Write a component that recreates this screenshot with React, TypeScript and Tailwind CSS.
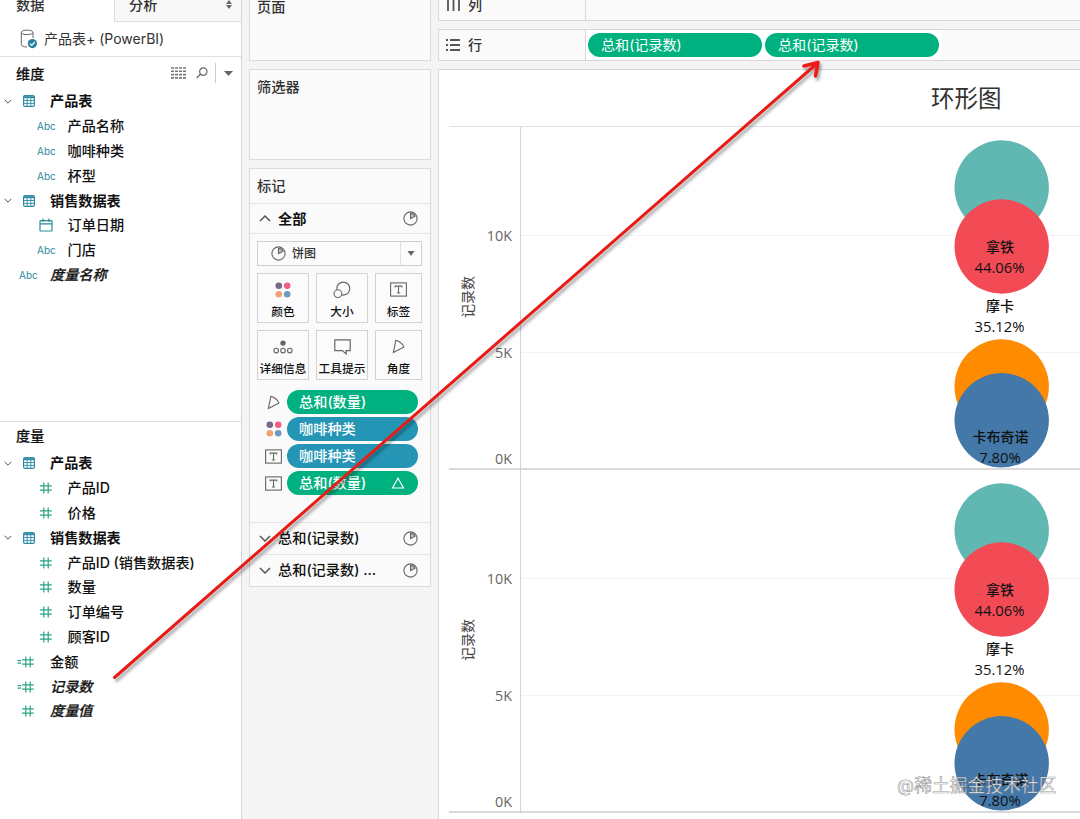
import type { ReactNode } from "react";

const FONT = "font-['Open_Sans','Noto_Sans_CJK_SC',sans-serif]";

function Chevron({ up = false, size = 8 }: { up?: boolean; size?: number }) {
  return (
    <svg width={size} height={size / 2 + 1} viewBox="0 0 12 7" fill="none" stroke="#555" strokeWidth="1.5" className="shrink-0">
      <path d={up ? "M1 6L6 1L11 6" : "M1 1L6 6L11 1"} />
    </svg>
  );
}

function TableIcon() {
  return (
    <svg width="12" height="12" viewBox="0 0 12 12" fill="none" stroke="#2d8ba3" className="shrink-0">
      <rect x="0.6" y="0.6" width="10.8" height="10.8" rx="1.4" strokeWidth="1.2" />
      <path d="M1 2.2H11" strokeWidth="2" />
      <path d="M1 5.5H11M1 8.4H11M4.2 3V11M7.8 3V11" strokeWidth="0.9" />
    </svg>
  );
}

function CalendarIcon() {
  return (
    <svg width="14" height="14" viewBox="0 0 14 14" fill="none" stroke="#2d8a9a" strokeWidth="1.2">
      <rect x="1" y="2.6" width="12" height="10.4" rx="0.8" />
      <path d="M1 5.9H13M4 0.6V4M10 0.6V4" />
    </svg>
  );
}

function HashIcon({ calc = false }: { calc?: boolean }) {
  return (
    <svg width="17" height="12" viewBox="0 0 17 12" fill="none" stroke="#2ca587" strokeWidth="1.2" className="shrink-0">
      <path d="M5 3.9H16.8M5 8.1H16.8M8.8 0.5V11.5M13.2 0.5V11.5" />
      {calc && <path d="M0.5 4.6H4M0.5 7.2H4" />}
    </svg>
  );
}

function Abc() {
  return <span className="font-['Inter',sans-serif] text-[10px] text-[#2d8a9a]">Abc</span>;
}

function PieIcon({ size = 15 }: { size?: number }) {
  return (
    <svg width={size} height={size} viewBox="0 0 15 15" fill="none" stroke="#666" strokeWidth="1.1" className="shrink-0">
      <circle cx="7.5" cy="7.5" r="6.6" />
      <path d="M7.5 7.5V2.4C9.6 2.4 11.2 3.4 12 5.2Z" fill="#c4c4c4" />
    </svg>
  );
}

function ColorDots() {
  return (
    <svg width="16" height="16" viewBox="0 0 16 16" className="shrink-0">
      <circle cx="3.8" cy="3.8" r="3.3" fill="#7b6888" />
      <circle cx="12.2" cy="3.8" r="3.3" fill="#f05f86" />
      <circle cx="3.8" cy="12.2" r="3.3" fill="#f3a274" />
      <circle cx="12.2" cy="12.2" r="3.3" fill="#7399c2" />
    </svg>
  );
}

function SizeIcon() {
  return (
    <svg width="18" height="18" viewBox="0 0 18 18" fill="none" stroke="#666" strokeWidth="1.1">
      <circle cx="10.3" cy="7.6" r="6.5" />
      <circle cx="4.9" cy="12.6" r="3.9" fill="#fbfbfb" />
    </svg>
  );
}

function LabelIcon() {
  return (
    <svg width="17" height="15" viewBox="0 0 17 15" fill="none" stroke="#666" strokeWidth="1.1" className="shrink-0">
      <rect x="0.6" y="0.9" width="15.8" height="13.2" />
      <path d="M5.2 5.6V4.1H11.8V5.6M8.5 4.1V11M6.9 11H10.1" />
    </svg>
  );
}

function DetailIcon() {
  return (
    <svg width="20" height="14" viewBox="0 0 20 14" fill="none" stroke="#666" strokeWidth="1.1">
      <circle cx="10" cy="3.1" r="2.7" fill="#666" stroke="none" />
      <circle cx="3.2" cy="10.6" r="2.3" />
      <circle cx="10" cy="10.6" r="2.3" />
      <circle cx="16.8" cy="10.6" r="2.3" />
    </svg>
  );
}

function TooltipIcon() {
  return (
    <svg width="17" height="16" viewBox="0 0 17 16" fill="none" stroke="#666" strokeWidth="1.2">
      <path d="M0.8 0.9H16.2V11.6H12.2V15L8.4 11.6H0.8Z" />
    </svg>
  );
}

function AngleIcon() {
  return (
    <svg width="13" height="15" viewBox="0 0 13 15" fill="none" stroke="#666" strokeWidth="1.1" className="shrink-0">
      <path d="M3.8 1.4C7 2.1 10.4 4.5 12 8.1L1.4 13.6Z" />
    </svg>
  );
}

type Field = { kind: "table" | "abc" | "date" | "num"; text: string; root?: boolean; italic?: boolean; calc?: boolean };

const dimensions: Field[] = [
  { kind: "table", text: "产品表" },
  { kind: "abc", text: "产品名称" },
  { kind: "abc", text: "咖啡种类" },
  { kind: "abc", text: "杯型" },
  { kind: "table", text: "销售数据表" },
  { kind: "date", text: "订单日期" },
  { kind: "abc", text: "门店" },
  { kind: "abc", text: "度量名称", root: true, italic: true },
];

const measures: Field[] = [
  { kind: "table", text: "产品表" },
  { kind: "num", text: "产品ID" },
  { kind: "num", text: "价格" },
  { kind: "table", text: "销售数据表" },
  { kind: "num", text: "产品ID (销售数据表)" },
  { kind: "num", text: "数量" },
  { kind: "num", text: "订单编号" },
  { kind: "num", text: "顾客ID" },
  { kind: "num", text: "金额", root: true, calc: true },
  { kind: "num", text: "记录数", root: true, italic: true, calc: true },
  { kind: "num", text: "度量值", root: true, italic: true },
];

function FieldRow({ field }: { field: Field }) {
  if (field.kind === "table") {
    return (
      <div className="flex h-[24.8px] items-center pl-1">
        <Chevron />
        <span className="ml-[11px] flex w-[27px]"><TableIcon /></span>
        <span className="font-bold">{field.text}</span>
      </div>
    );
  }
  return (
    <div className={field.root ? "flex h-[24.8px] items-center pl-[17px]" : "flex h-[24.8px] items-center pl-[35px]"}>
      <span className={field.root ? "flex w-[33px]" : "flex w-[32.5px]"}>
        {field.kind === "abc" && <span className="ml-0.5 flex"><Abc /></span>}
        {field.kind === "date" && <span className="ml-1 flex"><CalendarIcon /></span>}
        {field.kind === "num" && <HashIcon calc={field.calc} />}
      </span>
      <span className={field.italic ? "italic font-medium [-webkit-text-stroke:0.25px_#222]" : "font-medium"}>{field.text}</span>
    </div>
  );
}

function Sidebar() {
  return (
    <aside className="flex w-[242px] shrink-0 flex-col border-r border-[#d5d5d5] bg-white font-['Inter','Noto_Sans_CJK_SC',sans-serif] text-[14.15px] leading-5 text-[#111]">
      <div className="flex h-[22px] overflow-hidden text-[#333] font-medium">
        <div className="-mt-[5px] w-[114px] pl-4">数据</div>
        <div className="flex flex-1 items-start justify-between border-b border-l border-[#dedede] bg-[#f8f8f8] pl-3.5 pr-2">
          <span className="-mt-[5px]">分析</span>
          <svg width="8" height="10" viewBox="0 0 8 10" fill="#666"><path d="M4 0L7 4H1ZM4 9L7 5H1Z" /></svg>
        </div>
      </div>
      <div className="flex h-[35px] items-center border-b border-[#dedede] pl-5 text-[#333]">
        <svg width="18" height="20" viewBox="0 0 18 20" fill="none" className="shrink-0">
          <path d="M13 9V3.5C13 0.3 1.3 0.3 1.3 3.5V15.5C1.3 17.1 4 18 7 18" stroke="#666" />
          <path d="M1.3 3.5C1.3 6.3 13 6.3 13 3.5" stroke="#666" />
          <circle cx="12.4" cy="14.6" r="4.6" fill="#27809f" />
          <path d="M10 14.7L11.8 16.4L14.8 13" stroke="white" strokeWidth="1.2" />
        </svg>
        <span className="ml-1.5 text-[14px]">产品表+ (PowerBI)</span>
      </div>
      <div className="flex h-8 items-center pl-4 pr-2 font-medium">
        <span className="mt-px flex-1 [-webkit-text-stroke:0.2px_#222]">维度</span>
        <svg width="15" height="12" viewBox="0 0 15 12" stroke="#777" strokeWidth="1.6" strokeDasharray="3 1">
          <path d="M0 1H15M0 4.3H15M0 7.6H15M0 10.9H15" />
        </svg>
        <svg width="12" height="12" viewBox="0 0 12 12" fill="none" stroke="#666" strokeWidth="1.2" className="ml-2.5">
          <circle cx="7.3" cy="4.6" r="3.7" /><path d="M4.5 7.2L0.6 11" />
        </svg>
        <span className="ml-[7px] h-5 w-px bg-[#ccc]" />
        <svg width="9" height="5" viewBox="0 0 9 5" fill="#666" className="ml-2"><path d="M0 0H9L4.5 5Z" /></svg>
      </div>
      <div className="h-[332px]">
        {dimensions.map((f) => <FieldRow key={f.text} field={f} />)}
      </div>
      <div className="flex h-[30px] items-center border-t border-[#dedede] pb-0.5 pl-4 font-medium [-webkit-text-stroke:0.2px_#222]">度量</div>
      <div>
        {measures.map((f) => <FieldRow key={f.text} field={f} />)}
      </div>
    </aside>
  );
}

function MarkButton({ icon, text }: { icon: ReactNode; text: string }) {
  return (
    <div className="flex flex-col items-center border border-[#d2d2d2] bg-[#fbfbfb]">
      <span className="mt-1 flex h-[23px] items-center">{icon}</span>
      <span className="mt-[3px] whitespace-nowrap text-[11.7px] font-medium leading-4 text-[#111]">{text}</span>
    </div>
  );
}

function MarkPill({ icon, text, blue = false, delta = false }: { icon: ReactNode; text: string; blue?: boolean; delta?: boolean }) {
  return (
    <div className="flex h-6 items-center">
      <span className="flex w-[33px] justify-center">{icon}</span>
      <span className={(blue ? "bg-[#2595b5]" : "bg-[#00b180]") + " ml-[-3px] flex h-6 w-[131px] items-center justify-between rounded-full pl-3 pr-[13px] font-medium text-white"}>
        {text}
        {delta && <svg width="14" height="12" viewBox="0 0 14 12" fill="none" stroke="white" strokeWidth="1.2"><path d="M7 1.2L12.5 11H1.5Z" /></svg>}
      </span>
    </div>
  );
}

function MeasureSection({ text }: { text: string }) {
  return (
    <div className="flex h-8 items-center border-t border-[#e5e5e5] pb-px pl-[9px] pr-3">
      <Chevron size={12} />
      <span className="ml-[7px] flex-1 font-medium text-[#111]">{text}</span>
      <PieIcon />
    </div>
  );
}

function Cards() {
  return (
    <section className="flex w-[189px] shrink-0 flex-col gap-2 pl-[7px] font-['Inter','Noto_Sans_CJK_SC',sans-serif] text-[14.2px] leading-5 text-[#333]">
      <div className="h-[61px] w-[182px] border border-t-0 border-[#dadada] bg-[#fafafa] pl-[7px]">
        <div className="-mt-[3px] font-medium">页面</div>
      </div>
      <div className="h-[91px] w-[182px] border border-[#dadada] bg-[#fafafa] pl-[7px] pt-[7px] font-medium">筛选器</div>
      <div className="flex h-[419px] w-[182px] flex-col border border-[#dadada] bg-[#fafafa]">
        <div className="flex h-[34px] items-center pl-[7px] font-medium">标记</div>
        <div className="flex h-[31px] items-center border-y border-[#e5e5e5] pl-[9px] pr-3">
          <Chevron up size={12} />
          <span className="ml-[7px] flex-1 font-bold text-[#111]">全部</span>
          <PieIcon />
        </div>
        <div className="ml-[7px] mt-[7px] flex h-[25px] w-[165px] items-center border border-[#cfcfcf] bg-[#fbfbfb] pl-[13px]">
          <PieIcon />
          <span className="ml-1.5 flex-1 text-[12px] font-medium">饼图</span>
          <span className="flex h-full w-[21px] items-center justify-center border-l border-[#e0e0e0]">
            <svg width="8" height="5" viewBox="0 0 8 5" fill="#666"><path d="M0.5 0H7.5L4 5Z" /></svg>
          </span>
        </div>
        <div className="ml-[7px] mt-[7px] grid grid-cols-[52px_52px_47px] grid-rows-[50px_50px] gap-[7px]">
          <MarkButton icon={<ColorDots />} text="颜色" />
          <MarkButton icon={<SizeIcon />} text="大小" />
          <MarkButton icon={<LabelIcon />} text="标签" />
          <MarkButton icon={<DetailIcon />} text="详细信息" />
          <MarkButton icon={<TooltipIcon />} text="工具提示" />
          <MarkButton icon={<AngleIcon />} text="角度" />
        </div>
        <div className="ml-[7px] mt-2.5 flex flex-1 flex-col gap-[3.1px]">
          <MarkPill icon={<AngleIcon />} text="总和(数量)" />
          <MarkPill blue icon={<ColorDots />} text="咖啡种类" />
          <MarkPill blue icon={<LabelIcon />} text="咖啡种类" />
          <MarkPill delta icon={<LabelIcon />} text="总和(数量)" />
        </div>
        <MeasureSection text="总和(记录数)" />
        <MeasureSection text="总和(记录数) ..." />
      </div>
    </section>
  );
}

function ShelfPill() {
  return <div className="flex h-6 w-[174px] items-center rounded-full bg-[#00b180] pl-[13px] font-['Inter','Noto_Sans_CJK_SC',sans-serif] text-[14.1px] text-white">总和(记录数)</div>;
}

function PaneText({ x, y, size = 14, children }: { x: number; y: number; size?: number; children: ReactNode }) {
  return <text x={x} y={y} textAnchor="middle" fontSize={size} fill="#111">{children}</text>;
}

function Pane() {
  return (
    <svg width="631" height="343" viewBox="0 0 631 343" className="block shrink-0">
      <path d="M72 108.5H631M72 225.5H631" stroke="#f3f3f3" />
      <path d="M71.5 0V343" stroke="#d5d5d5" />
      <path d="M0 342H631" stroke="#cdcdcd" strokeWidth="1.5" />
      <g fontSize="14.4" fill="#666" textAnchor="end">
        <text x="63" y="114">10K</text>
        <text x="63" y="231">5K</text>
        <text x="63" y="337">0K</text>
      </g>
      <text transform="translate(24 170) rotate(-90)" textAnchor="middle" fontSize="14" fill="#444">记录数</text>
      <circle cx="552.7" cy="60.5" r="47.2" fill="#61b8b2" />
      <circle cx="552.7" cy="119.5" r="47.2" fill="#f24b56" />
      <circle cx="552.7" cy="259.5" r="47.2" fill="#ff8c00" />
      <circle cx="552.7" cy="293.3" r="47.2" fill="#4378a9" />
      <g className="font-medium">
        <PaneText x={551} y={125}>拿铁</PaneText>
        <PaneText x={551} y={184}>摩卡</PaneText>
        <PaneText x={551.5} y={315}>卡布奇诺</PaneText>
      </g>
      <PaneText size={14.8} x={550.5} y={146}>44.06%</PaneText>
      <PaneText size={14.8} x={550.5} y={205}>35.12%</PaneText>
      <PaneText size={14.8} x={551} y={335.5}>7.80%</PaneText>
    </svg>
  );
}

function Worksheet() {
  return (
    <main className="ml-[7px] flex min-w-0 flex-1 flex-col text-[14px] leading-5 text-[#333]">
      <div className="flex h-[21px] shrink-0 overflow-hidden border-b border-l border-[#d8d8d8] bg-[#fafafa]">
        <div className="flex w-[147px] items-start border-r border-[#d8d8d8] pl-2">
          <svg width="13" height="12" viewBox="0 0 13 12" stroke="#555" strokeWidth="1.8"><path d="M1 0V11M6.5 0V11M12 0V11" /></svg>
          <span className="-mt-[5px] ml-2 font-medium">列</span>
        </div>
      </div>
      <div className="mt-2 flex h-8 shrink-0 items-center border-y border-l border-[#d8d8d8] bg-[#fafafa]">
        <div className="flex h-full w-[147px] items-center border-r border-[#d8d8d8] pl-[7px]">
          <svg width="14" height="12" viewBox="0 0 14 12" stroke="#555" strokeWidth="2"><path d="M0 1H2M4 1H14M0 6H2M4 6H14M0 11H2M4 11H14" /></svg>
          <span className="ml-2 font-medium">行</span>
        </div>
        <div className="flex h-full items-center gap-[3px] bg-white px-0.5">
          <ShelfPill />
          <ShelfPill />
        </div>
      </div>
      <div className="mt-2 flex min-h-0 flex-1 flex-col overflow-hidden border-l border-t border-[#d8d8d8] bg-white pl-[10px]">
        <div className="flex h-[57px] shrink-0 items-center border-b border-[#e2e2e2] pl-[482px] text-[23.5px] leading-8">环形图</div>
        <Pane />
        <Pane />
      </div>
    </main>
  );
}

export default function App() {
  return (
    <div className={`relative flex h-[819px] w-[1080px] overflow-hidden bg-[#f4f4f4] ${FONT}`}>
      <Sidebar />
      <Cards />
      <Worksheet />
      <svg width="1080" height="819" viewBox="0 0 1080 819" fill="none" className="pointer-events-none absolute inset-0 drop-shadow-[2px_3px_1.5px_rgba(0,0,0,0.35)]">
        <path d="M114.5 677.5L817 63.5" stroke="#e71c17" strokeWidth="3" strokeLinecap="round" />
        <path d="M804 66L818 62.5L815.5 76" stroke="#f01a16" strokeWidth="3.6" strokeLinecap="round" strokeLinejoin="round" />
      </svg>
      <div className="absolute left-[897px] top-[774px] whitespace-nowrap font-['Inter','Noto_Sans_CJK_SC',sans-serif] text-[17.8px] leading-6 text-white/85 [-webkit-text-stroke:0.6px_rgba(90,90,90,0.65)]">@稀土掘金技术社区</div>
    </div>
  );
}
